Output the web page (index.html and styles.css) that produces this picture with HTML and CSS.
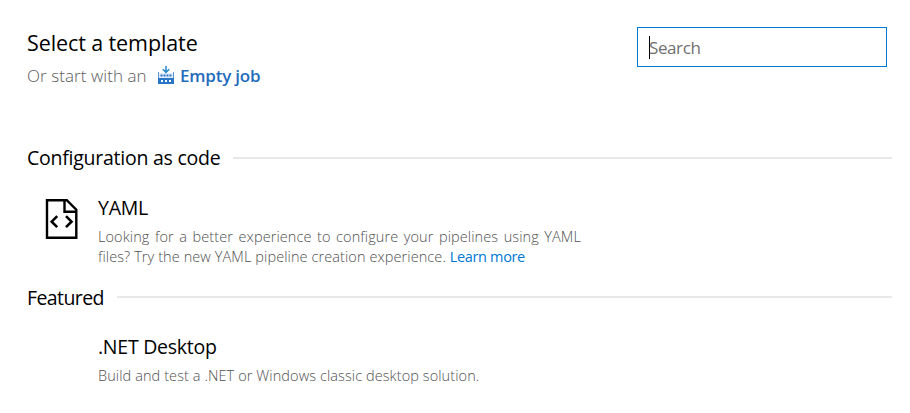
FILE: index.html
```html
<!DOCTYPE html>
<html lang="en">
<head>
<meta charset="utf-8">
<title>Select a template</title>
<link rel="stylesheet" href="styles.css">
</head>
<body>
<main class="page">
  <header class="header">
    <div>
      <h1 class="title">Select a template</h1>
      <p class="start"><span class="start-text">Or start with an</span>
        <a class="empty-job">
          <svg class="job-icon" width="16" height="18" viewBox="0 0 16 18">
            <path d="M0 6h1v6H0zM15 6h1v6h-1z" fill="#5b93cf"/>
            <path d="M1 7h14v5H1z" fill="#e3edf8"/>
            <path d="M2.500 8.500h2v2h-2zM5.500 8.500h2v2h-2zM8.500 8.500h2v2h-2zM11.500 8.500h2v2h-2zM0 12h16v6H0z" fill="#2a76c6"/>
            <path d="M3 14h2v2H3zM7 14h2v2H7zM11 14h2v2h-2z" fill="#fff"/>
            <path d="M8 0v6M4.800 3.200L8 6.400l3.200-3.200" fill="none" stroke="#2787cb" stroke-width="1.500"/>
          </svg>
          <span>Empty job</span>
        </a>
      </p>
    </div>
    <div class="search"><span class="caret"></span><span>Search</span></div>
  </header>

  <section class="group">
    <h2 class="heading config">Configuration as code</h2>
    <div class="item">
      <svg class="yaml-icon" width="33" height="40" viewBox="0 0 33 40">
        <path d="M2 1.200H21.800L31.300 10.700V38.800H2z" fill="none" stroke="#000" stroke-width="2.400"/>
        <path d="M19.500 1v11.800H31" fill="none" stroke="#000" stroke-width="2.400"/>
        <path d="M12.200 17.200L6.700 22.700l5.500 5.500M21 17.200l5.500 5.500-5.500 5.500" fill="none" stroke="#000" stroke-width="2.600"/>
      </svg>
      <div>
        <h3 class="name">YAML</h3>
        <p class="desc">Looking for a better experience to configure your pipelines using YAML files? Try the new YAML pipeline creation experience. <a class="learn">Learn more</a></p>
      </div>
    </div>
  </section>

  <section class="group">
    <h2 class="heading featured">Featured</h2>
    <div class="item plain">
      <div>
        <h3 class="name">.NET Desktop</h3>
        <p class="desc">Build and test a .NET or Windows classic desktop solution.</p>
      </div>
    </div>
  </section>
</main>
</body>
</html>
```
FILE: styles.css
```css
* { box-sizing: border-box; }
body { margin: 0; background: #fff; color: #000; font-family: "Open Sans", "Noto Sans", sans-serif; }
h1, h2, h3, p { margin: 0; font-weight: 400; }
.page { height: 413px; padding: 27px 18px 0 27px; overflow: hidden; }
.header { display: flex; justify-content: space-between; height: 117px; padding-right: 5px; }
.title { margin-top: 1px; font-size: 21.500px; line-height: 30px; letter-spacing: -0.100px; }
.start { display: flex; align-items: center; margin-top: 6px; height: 24px; font-size: 17px; line-height: 24px; white-space: nowrap; }
.start-text { width: 131px; font-weight: 300; color: #5c5c5c; letter-spacing: 0.060px; }
.empty-job { display: flex; align-items: center; gap: 6px; color: #1f6cbd; font-weight: 600; letter-spacing: -0.200px; }
.job-icon { margin-bottom: 2px; }
.search { display: flex; align-items: center; width: 250px; height: 40px; padding-left: 11px; border: 1px solid #0078d4; font-size: 17px; color: #707070; letter-spacing: -0.400px; }
.caret { width: 1px; height: 23px; margin-right: -1px; background: #000; }
.group { height: 140px; }
.heading { display: flex; align-items: center; gap: 13px; height: 28px; font-size: 19.500px; line-height: 28px; }
.config { letter-spacing: -0.250px; }
.featured { letter-spacing: -0.600px; }
.heading::after { content: ""; flex: 1; height: 2px; background: #e8e8e8; }
.featured::after { margin-top: -2px; }
.item { display: flex; gap: 20px; padding: 22px 0 0 18px; }
.plain { padding: 21px 0 0 71px; }
.yaml-icon { margin-top: 5px; flex: none; }
.name { font-size: 19.500px; line-height: 28px; letter-spacing: -0.250px; }
.desc { width: 483px; margin-top: 5px; font-size: 14.500px; line-height: 20px; font-weight: 300; color: #505050; letter-spacing: 0.090px; text-align: justify; }
.learn { color: #0078d4; font-weight: 400; letter-spacing: -0.350px; }
```
